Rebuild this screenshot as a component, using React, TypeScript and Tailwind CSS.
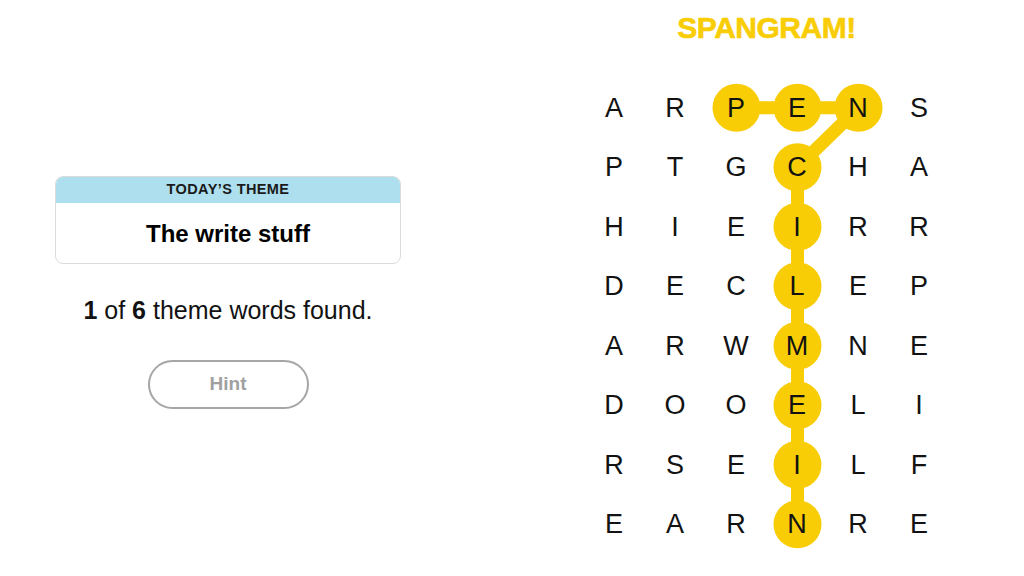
const ROWS = [
  'ARPENS',
  'PTGCHA',
  'HIEIRR',
  'DECLEP',
  'ARWMNE',
  'DOOELI',
  'RSEILF',
  'EARNRE',
];

const CW = 61;
const CH = 59.5;

// spangram path: [col, row]
const PATH: [number, number][] = [
  [2, 0], [3, 0], [4, 0], [3, 1], [3, 2], [3, 3], [3, 4], [3, 5], [3, 6], [3, 7],
];

const YELLOW = '#F8CD05';

function Board() {
  const pts = PATH.map(([c, r]) => `${c * CW + CW / 2},${r * CH + CH / 2}`).join(' ');
  return (
    <div className="relative w-[366px] h-[476px]">
      <svg className="absolute inset-0" width={366} height={476}>
        <polyline points={pts} fill="none" stroke={YELLOW} strokeWidth={13} strokeLinejoin="round" />
        {PATH.map(([c, r]) => (
          <circle key={`${c}-${r}`} cx={c * CW + CW / 2} cy={r * CH + CH / 2} r={24} fill={YELLOW} />
        ))}
      </svg>
      <div className="relative grid grid-cols-[repeat(6,61px)] auto-rows-[59.5px]">
        {ROWS.map((row, r) =>
          row.split('').map((ch, c) => (
            <div key={`${r}-${c}`} className="flex items-center justify-center text-[27px] leading-none text-[#121212] pt-[1px]">
              {ch}
            </div>
          ))
        )}
      </div>
    </div>
  );
}

export default function App() {
  return (
    <div className="w-[1024px] h-[576px] bg-white flex font-['Liberation_Sans',Arial,sans-serif] overflow-hidden">
      <div className="w-[456px] flex flex-col items-center pt-[176px]">
        <div className="w-[346px] h-[88px] rounded-lg border border-[#dcdcdc] overflow-hidden flex flex-col">
          <div className="h-[26px] bg-[#AEDFEE] flex items-center justify-center text-[14.5px] font-bold tracking-[0.4px] text-[#1a1a1a]">
            TODAY’S THEME
          </div>
          <div className="flex-1 flex items-center justify-center text-[24px] font-bold text-black pt-[1px]">
            The write stuff
          </div>
        </div>
        <div className="mt-[28px] text-[25px] leading-[37px] text-[#121212]">
          <span className="font-bold">1</span> of <span className="font-bold">6</span> theme words found.
        </div>
        <button className="mt-[31px] w-[161px] h-[49px] rounded-full border-2 border-[#a6a6a6] text-[19px] font-bold text-[#a0a0a0] flex items-center justify-center">
          Hint
        </button>
      </div>
      <div className="flex flex-col ml-[127.5px]">
        <div className="h-[78px] w-[366px] flex justify-center pt-[11px]">
          <span className="text-[30px] font-bold leading-[34px] tracking-[-0.5px] [-webkit-text-stroke:0.6px_#F8CD05]" style={{ color: YELLOW }}>
            SPANGRAM!
          </span>
        </div>
        <Board />
      </div>
    </div>
  );
}
